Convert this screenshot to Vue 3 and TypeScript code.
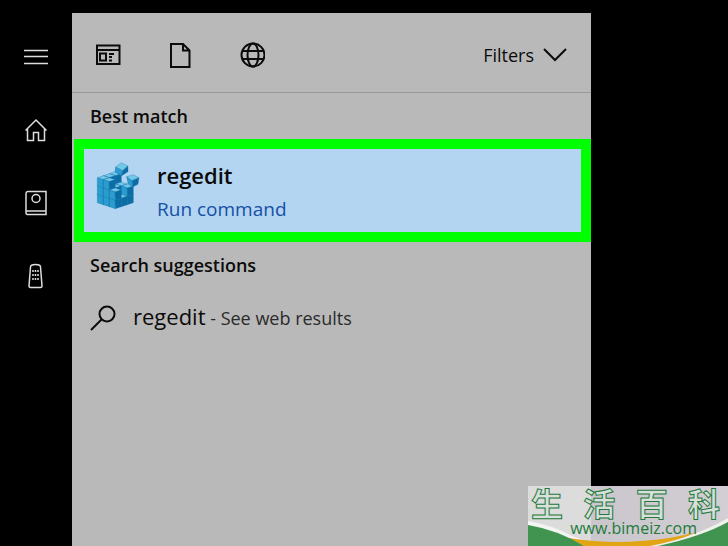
<script setup lang="ts">
import { ref } from 'vue'

interface Scope { label: string; icon: 'apps' | 'documents' | 'web' }
interface Block { top: string; left: string; right: string }

const scopes: Scope[] = [
  { label: 'Apps', icon: 'apps' },
  { label: 'Documents', icon: 'documents' },
  { label: 'Web', icon: 'web' },
]
const query = ref('regedit')

// Registry icon: stacks of small isometric blocks, listed back to front.
const heights = [[2, 1, 2], [3, 2, 2], [3, 3, 3]]
const blocks: Block[] = []
for (let i = 2; i >= 0; i--) {
  for (let j = 2; j >= 0; j--) {
    for (let k = 0; k < heights[i][j]; k++) {
      const x = 64 - 18 * i + 18 * j
      const y = 146 - 6 * i - 6 * j - 25 * k
      blocks.push({
        top: `M${x} ${y - 25}l-18-6 18-6 18 6z`,
        left: `M${x} ${y}v-25l-18-6v25z`,
        right: `M${x} ${y}v-25l18-6v25z`,
      })
    }
  }
}
</script>

<template>
  <div class="screen">
    <nav class="rail" aria-label="Main">
      <button type="button" aria-label="Menu">
        <svg width="26" height="26" viewBox="0 0 26 26"><path d="M1 6.500h24M1 12.500h24M1 19.500h24" /></svg>
      </button>
      <button type="button" aria-label="Home">
        <svg width="26" height="26" viewBox="0 0 26 26"><path d="M2.500 13.500L13 3L23.500 13.500M4.500 12v11.500h6v-8h5v8h6V12" /></svg>
      </button>
      <button type="button" aria-label="Notebook">
        <svg width="26" height="26" viewBox="0 0 26 26"><path d="M23 1.500H5a2 2 0 0 0-2 2V23a1.500 1.500 0 0 0 1.500 1.500H23zM3.500 21H23" /><circle cx="13" cy="8.500" r="4" /></svg>
      </button>
      <button type="button" aria-label="Devices">
        <svg width="26" height="26" viewBox="0 0 26 26"><path d="M7.500 4q0-2.500 5-2.500t5 2.500l1.500 19q0 1.500-1.500 1.500h-10q-1.500 0-1.500-1.500z" /><path class="dots" d="M10 7v11M12.500 7v11M15 7v11" /></svg>
      </button>
    </nav>

    <main class="panel">
      <header class="toolbar">
        <button v-for="s in scopes" :key="s.icon" class="scope" type="button" :aria-label="s.label">
          <svg v-if="s.icon === 'apps'" width="26" height="26" viewBox="0 0 26 26"><path d="M2 3.500h22.500v18.500H2zM2 8h22.500M5 11.500h6v7H5zM14 12h5M14 15h3M14 18.500h3" /></svg>
          <svg v-else-if="s.icon === 'documents'" width="26" height="26" viewBox="0 0 26 26"><path d="M4 2h12l6.500 6.500V25H4zM16 2v6.500h6.500" /></svg>
          <svg v-else width="26" height="26" viewBox="0 0 26 26"><circle cx="14" cy="13" r="11.500" /><ellipse cx="14" cy="13" rx="5.500" ry="11.500" /><path d="M3.500 9h21M3.500 17h21" /></svg>
        </button>
        <button class="filters" type="button">
          Filters
          <svg width="26" height="16" viewBox="0 0 26 16"><path d="M2 2l11 11L24 2" /></svg>
        </button>
      </header>

      <h2>Best match</h2>
      <a class="best" href="#run">
        <svg class="registry" width="46" height="50" viewBox="0 0 138 150" aria-hidden="true">
          <g v-for="(b, n) in blocks" :key="n">
            <path class="top" :d="b.top" />
            <path class="left" :d="b.left" />
            <path class="right" :d="b.right" />
          </g>
          <g>
            <path class="top" d="M82 8l20 10-16 14-21-11z" />
            <path class="left" d="M65 21l21 11-3 15-20-11z" />
            <path class="right" d="M102 18l0 17-19 12 3-15z" />
          </g>
          <g>
            <path class="top" d="M98 50l20-6 17 9-21 9z" />
            <path class="left" d="M98 50l16 12 3 18-15-9z" />
            <path class="right" d="M135 53l-3 20-15 7-3-18z" />
          </g>
        </svg>
        <span class="labels">
          <strong>{{ query }}</strong>
          <span>Run command</span>
        </span>
      </a>

      <h2>Search suggestions</h2>
      <a class="suggestion" href="#web">
        <svg width="26" height="26" viewBox="0 0 26 26"><circle cx="17" cy="9" r="7.500" /><path d="M11.500 14.500L1 25" /></svg>
        <span>{{ query }}<small> - See web results</small></span>
      </a>
    </main>

    <aside class="watermark">
      <svg class="swoosh" viewBox="0 0 200 60" preserveAspectRatio="none" aria-hidden="true">
        <path fill="#f4f4f0" d="M0 35Q24 39 44 50L72 60H50Q28 45 0 40z" />
        <path fill="#e0a414" d="M40 52Q80 58 112 55Q145 53 168 46Q146 58 126 60H56z" />
        <path fill="#41944f" d="M0 39Q30 44 56 60H0z" />
        <path fill="#f0f0ec" d="M122 60Q165 52 200 32V40L140 60z" />
        <path fill="#41944f" d="M130 60Q175 50 200 36V60z" />
      </svg>
      <span class="brand"><span v-for="c in '生活百科'" :key="c">{{ c }}</span></span>
      <span class="site">www.bimeiz.com</span>
    </aside>
  </div>
</template>

<style>
body { background: #000; }
</style>

<style scoped>
.screen { position: relative; display: grid; grid-template-columns: 72px minmax(0, 519fr) minmax(0, 137fr); min-height: 100vh; overflow: hidden; background: #000; font-family: "Open Sans", "Noto Sans", sans-serif; color: #0b0b0b; }
button { padding: 0; border: 0; background: none; font: inherit; color: inherit; }
a { color: inherit; text-decoration: none; }
svg { display: block; flex: none; fill: none; stroke: currentColor; stroke-width: 2; }
.rail { display: flex; flex-direction: column; align-items: center; gap: 47px; padding-top: 44px; color: #ddd; }
.rail svg { stroke-width: 1.5; }
.rail .dots { stroke-dasharray: 2 2; }
.panel { margin-top: 13px; background: #b9b9b9; }
.toolbar { display: flex; align-items: center; gap: 46px; height: 74px; padding: 5px 23px 0; border-bottom: 1px solid #999; }
.filters { display: flex; align-items: center; gap: 8px; margin-left: auto; font-size: 18px; }
h2 { margin: 0; padding: 1px 18px; font-size: 18px; line-height: 44px; font-weight: 600; }
.best { display: flex; align-items: center; gap: 17px; border: 10px solid #0f0; margin-left: 2px; padding: 2px 10px 0; height: 81px; background: #b3d5f1; }
.registry { align-self: flex-start; margin-top: 9px; stroke: #1174ad; stroke-width: 1; }
.registry .top { fill: #72c8e6; }
.registry .left { fill: #2a9dce; }
.registry .right { fill: #0e6ca5; }
.labels { display: flex; flex-direction: column; font-size: 19px; line-height: 34px; color: #1550a4; }
.labels strong { font-size: 22px; font-weight: 600; color: #0b0b0b; }
.suggestion { display: flex; align-items: center; gap: 17px; padding: 12px 18px; font-size: 22px; line-height: 33px; }
small { font-size: 18px; color: #2b2b2b; }
.watermark { position: absolute; right: 0; bottom: 0; display: flex; flex-direction: column; width: 200px; height: 60px; background: linear-gradient(to right, #dcdcdc 63px, #cbc6cc 63px, #d2ced3); color: #217a3b; }
.swoosh { position: absolute; inset: 0; width: 100%; height: 100%; stroke: none; }
.brand { position: relative; display: flex; justify-content: space-between; padding: 0 8px 0 3px; font: 700 32px/32px "Noto Sans CJK SC", sans-serif; color: #d9dfda; -webkit-text-stroke: 1px #217a3b; }
.site { position: relative; align-self: flex-end; padding-right: 31px; font-size: 16px; line-height: 20px; }
</style>
